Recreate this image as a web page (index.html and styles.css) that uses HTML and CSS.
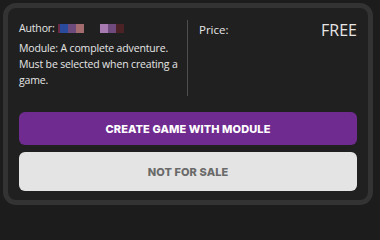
FILE: index.html
```html
<!DOCTYPE html>
<html>
<head>
<meta charset="utf-8">
<link rel="stylesheet" href="styles.css">
</head>
<body>
<div class="card">
  <div class="info">
    <div class="left">
      <div class="author">Author: <span class="pix"><i class="p0"></i><i class="p1"></i><i class="p2"></i><i class="p3"></i><i class="gap"></i><i class="p4"></i><i class="p5"></i><i class="p6"></i></span></div>
      <p class="desc">Module: A complete adventure. Must be selected when creating a game.</p>
    </div>
    <div class="right">
      <span class="price-label">Price:</span>
      <span class="price">FREE</span>
    </div>
  </div>
  <button class="btn primary">CREATE GAME WITH MODULE</button>
  <button class="btn disabled">NOT FOR SALE</button>
</div>
</body>
</html>
```
FILE: styles.css
```css
html, body {
  margin: 0;
  padding: 0;
  background: #1c1c1c;
}
body {
  font-family: "Open Sans", "Noto Sans", sans-serif;
  color: #e6e6e6;
}
.card {
  box-sizing: border-box;
  margin: 3px 0 0 3px;
  width: 370px;
  height: 202px;
  border: 5px solid #333333;
  border-radius: 13px;
  background: #202020;
  padding: 12px 11px 9px 11px;
  display: flex;
  flex-direction: column;
}
.info {
  display: flex;
  height: 76px;
  margin-bottom: 16px;
}
.left {
  width: 169px;
  border-right: 1px solid #4e4e4e;
  box-sizing: border-box;
  padding-right: 8px;
}
.author {
  font-size: 10.5px;
  line-height: 16px;
  letter-spacing: -0.15px;
  display: flex;
  align-items: center;
}
.pix {
  display: inline-flex;
  margin-left: 3px;
  height: 9px;
}
.pix i { display: block; width: 8px; height: 9px; }
.pix .p0 { width: 2px; background: #6a2a44; }
.pix .p1 { background: #2a4a9c; }
.pix .p2 { background: #6c4a7c; }
.pix .p3 { background: #a46c6e; }
.pix .gap { width: 16px; }
.pix .p4 { background: #a87ab2; }
.pix .p5 { background: #6f4a7c; }
.pix .p6 { background: #4c2226; }
.desc {
  margin: 4px 0 0 0;
  font-size: 10.5px;
  line-height: 16px;
  letter-spacing: -0.15px;
}
.right {
  flex: 1;
  padding-left: 11px;
  display: flex;
  justify-content: space-between;
  align-items: flex-start;
}
.price-label {
  font-size: 11.5px;
  line-height: 16px;
  margin-top: 2px;
}
.price {
  font-size: 16px;
  line-height: 20px;
}
.btn {
  display: block;
  width: 100%;
  border: none;
  border-radius: 6px;
  font-family: "Inter", sans-serif;
  font-weight: 800;
  font-size: 11px;
  letter-spacing: 0.1px;
  cursor: pointer;
}
.primary {
  height: 33px;
  background: #6f2b8f;
  color: #ffffff;
}
.disabled {
  height: 39px;
  margin-top: 7px;
  background: #e4e4e4;
  color: #6a6a6a;
}
```
